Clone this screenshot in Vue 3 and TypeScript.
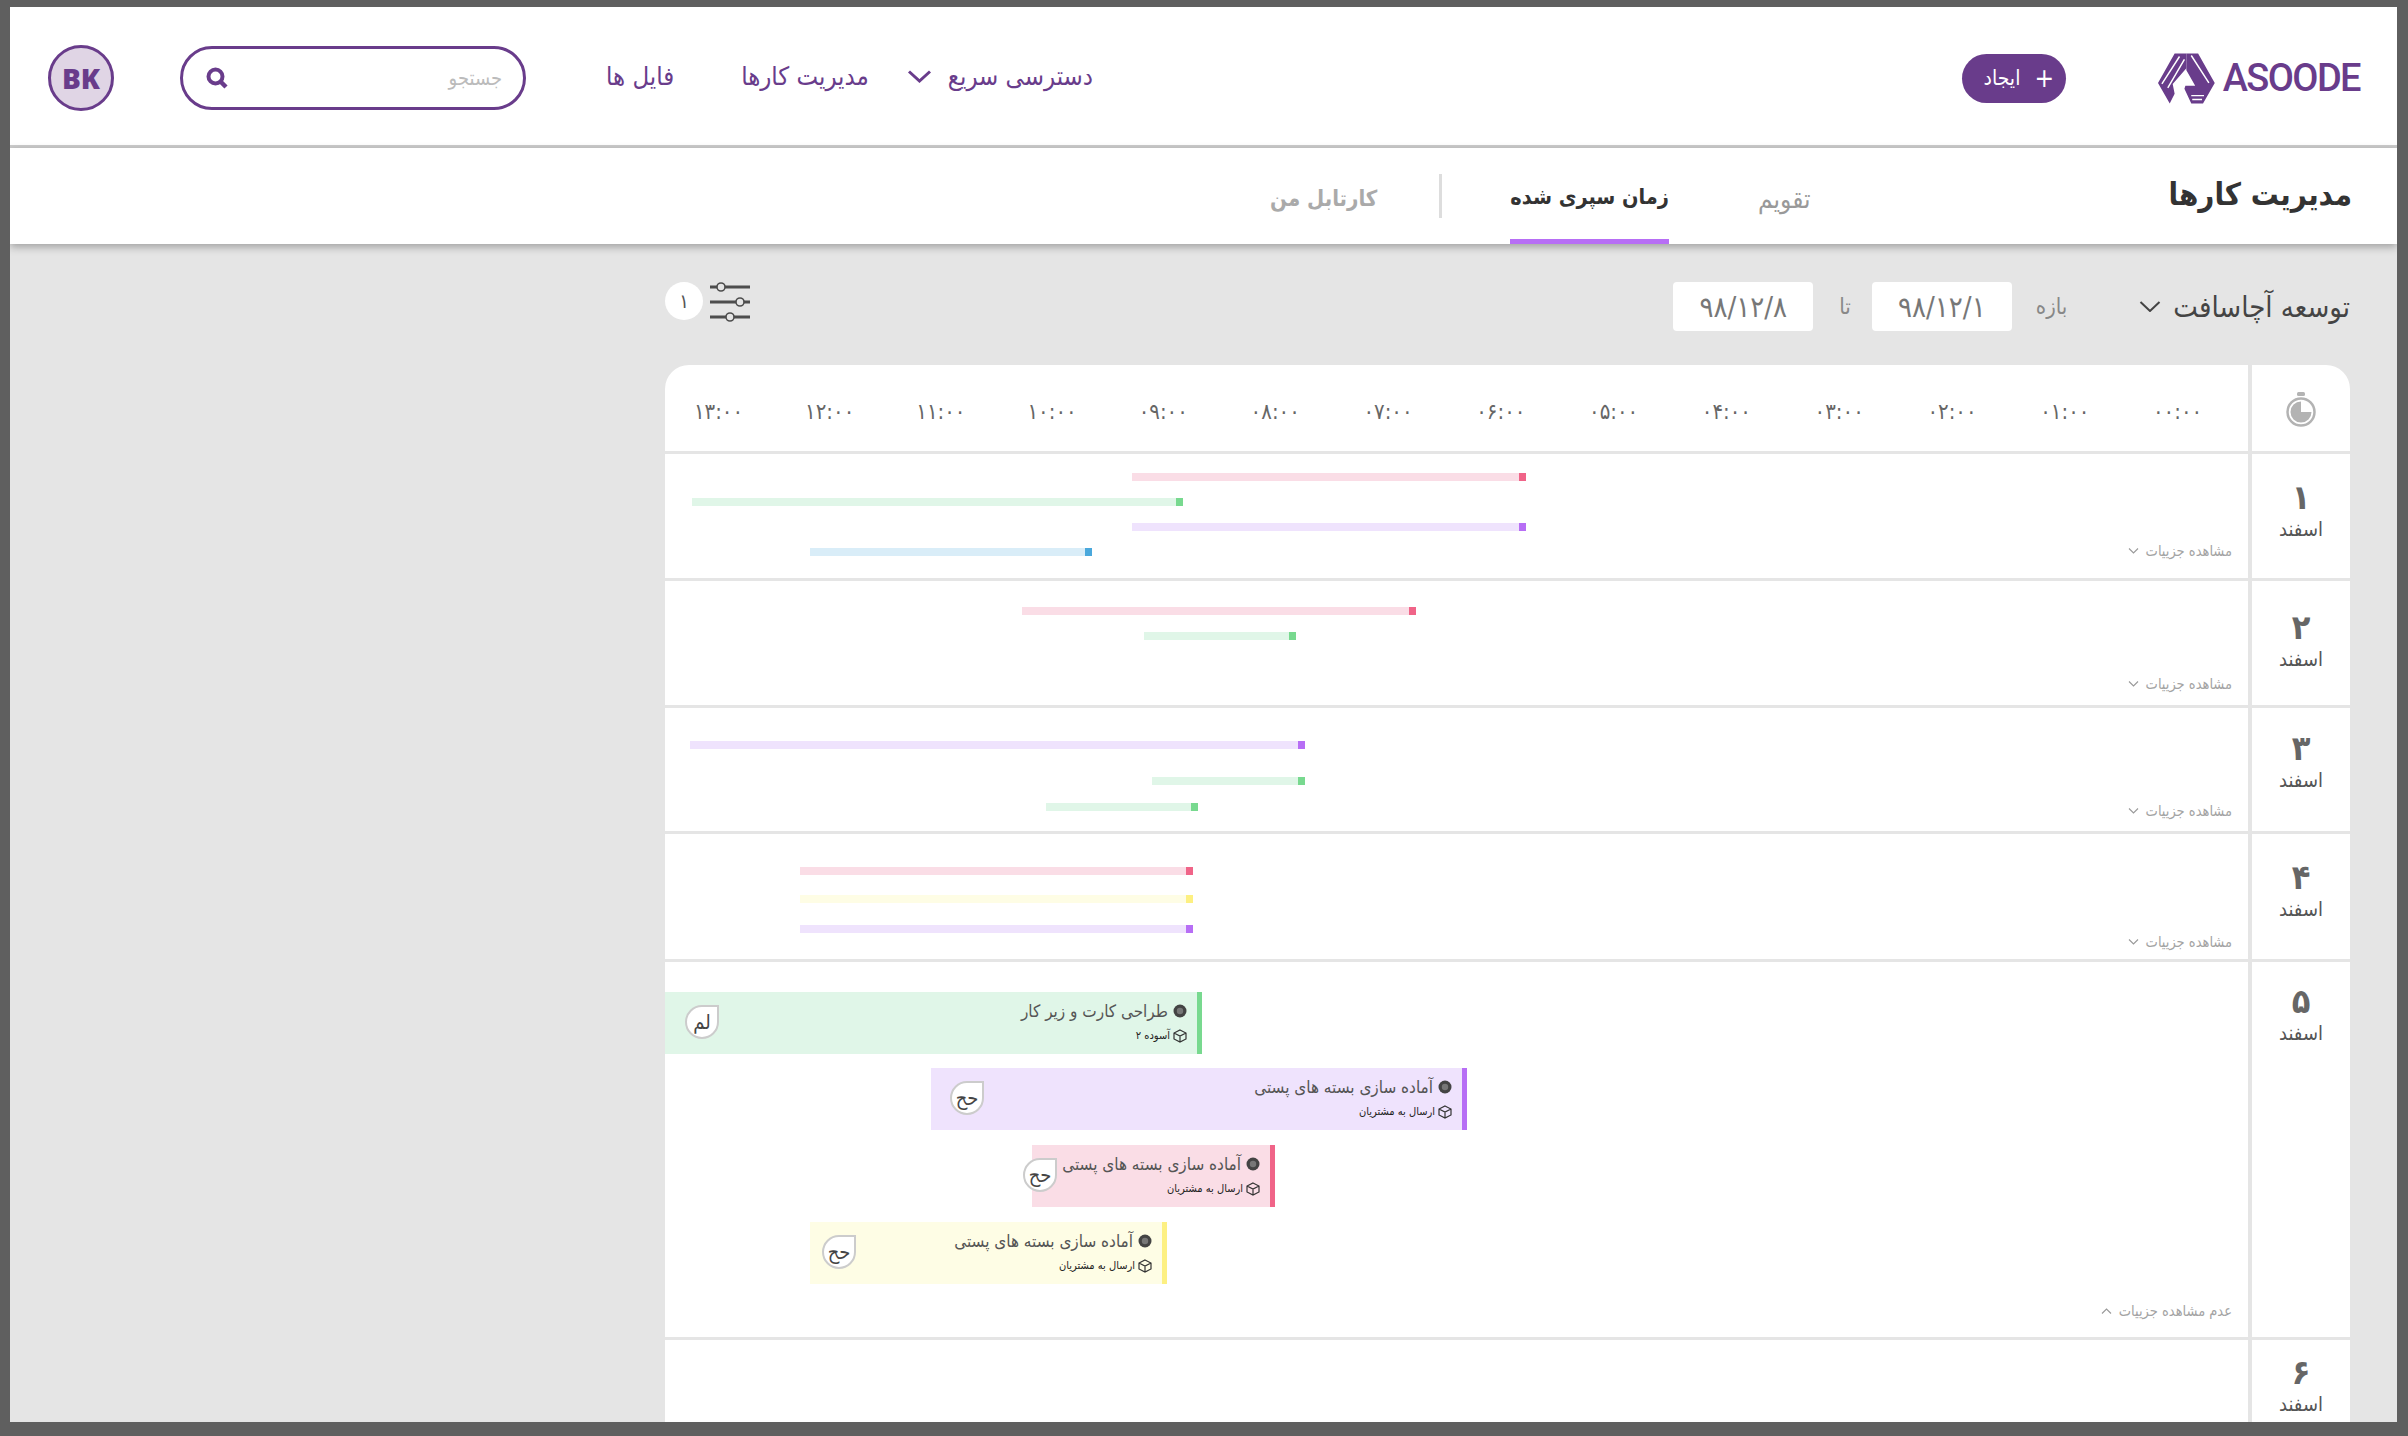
<script setup lang="ts">
interface Bar { color: string; from: number; to: number; y: number }
interface Task { color: string; from: number; to: number; y: number; title: string; sub: string; who: string; whoX: number }
interface Day {
  num: string
  height: number
  pad: number
  detail: number
  open?: boolean
  bars: Bar[]
  tasks: Task[]
}

const palette: Record<string, { bg: string; fg: string }> = {
  pink: { bg: '#fadde6', fg: '#f06488' },
  green: { bg: '#e0f6e8', fg: '#78d98f' },
  purple: { bg: '#efe3fd', fg: '#b76ef5' },
  blue: { bg: '#d9edf8', fg: '#4aa8dc' },
  yellow: { bg: '#fefde5', fg: '#fdf082' },
}

const hours = ['۰۰:۰۰', '۰۱:۰۰', '۰۲:۰۰', '۰۳:۰۰', '۰۴:۰۰', '۰۵:۰۰', '۰۶:۰۰', '۰۷:۰۰', '۰۸:۰۰', '۰۹:۰۰', '۱۰:۰۰', '۱۱:۰۰', '۱۲:۰۰', '۱۳:۰۰']

// x values are page pixels, the lane origin is subtracted when drawn
const days: Day[] = [
  {
    num: '۱', height: 127, pad: 26, detail: 97,
    bars: [
      { color: 'pink', from: 1132, to: 1526, y: 19 },
      { color: 'green', from: 692, to: 1183, y: 44 },
      { color: 'purple', from: 1132, to: 1526, y: 69 },
      { color: 'blue', from: 810, to: 1092, y: 94 },
    ],
    tasks: [],
  },
  {
    num: '۲', height: 127, pad: 29, detail: 103,
    bars: [
      { color: 'pink', from: 1022, to: 1416, y: 26 },
      { color: 'green', from: 1144, to: 1296, y: 51 },
    ],
    tasks: [],
  },
  {
    num: '۳', height: 126, pad: 23, detail: 103,
    bars: [
      { color: 'purple', from: 690, to: 1305, y: 33 },
      { color: 'green', from: 1152, to: 1305, y: 69 },
      { color: 'green', from: 1046, to: 1198, y: 95 },
    ],
    tasks: [],
  },
  {
    num: '۴', height: 128, pad: 26, detail: 108,
    bars: [
      { color: 'pink', from: 800, to: 1193, y: 33 },
      { color: 'yellow', from: 800, to: 1193, y: 61 },
      { color: 'purple', from: 800, to: 1193, y: 91 },
    ],
    tasks: [],
  },
  {
    num: '۵', height: 378, pad: 22, detail: 349, open: true,
    bars: [],
    tasks: [
      { color: 'green', from: 665, to: 1202, y: 30, title: 'طراحی کارت و زیر کار', sub: 'آسوده ۲', who: 'لم', whoX: 20 },
      { color: 'purple', from: 931, to: 1467, y: 106, title: 'آماده سازی بسته های پستی', sub: 'ارسال به مشتریان', who: 'حح', whoX: 19 },
      { color: 'pink', from: 1032, to: 1275, y: 183, title: 'آماده سازی بسته های پستی', sub: 'ارسال به مشتریان', who: 'حح', whoX: -9 },
      { color: 'yellow', from: 810, to: 1167, y: 260, title: 'آماده سازی بسته های پستی', sub: 'ارسال به مشتریان', who: 'حح', whoX: 12 },
    ],
  },
  { num: '۶', height: 90, pad: 15, detail: -1, bars: [], tasks: [] },
]

const laneLeft = 665

function spanStyle(b: Bar | Task) {
  return {
    left: `${b.from - laneLeft}px`,
    width: `${b.to - b.from}px`,
    top: `${b.y}px`,
    background: palette[b.color].bg,
    borderRightColor: palette[b.color].fg,
  }
}
</script>

<template>
  <div class="page">
    <header class="topbar">
      <div class="logo">
        <svg class="logo-mark" width="58" height="51" viewBox="0 0 58 51">
          <path d="M17 0 H29 V15 L15 31 L17 41 L12 51 L0 30 Z" fill="#693c8b" />
          <path d="M29 0 H41 L58 30 L46 51 H34 L27 36 L28 33 H38 L29 17 Z" fill="#693c8b" />
          <path d="M22 3 L4 31 M27 6 L10 35 M34 2 L52 30 M34 43 H47 M35 47 H45" stroke="#fff" stroke-width="1.5" fill="none" />
        </svg>
        <span class="logo-text">ASOODE</span>
      </div>
      <button class="create"><span class="plus">+</span>ایجاد</button>
      <nav class="menu">
        <a class="menu-item">دسترسی سریع
          <svg width="25" height="13" viewBox="0 0 25 13"><path d="M2 1.5 L12.5 11 L23 1.5" fill="none" stroke="#693c8b" stroke-width="3" /></svg>
        </a>
        <a class="menu-item">مدیریت کارها</a>
        <a class="menu-item">فایل ها</a>
      </nav>
      <div class="search">
        <span class="search-hint">جستجو</span>
        <svg width="22" height="22" viewBox="0 0 22 22"><circle cx="9.5" cy="9.5" r="7" fill="none" stroke="#693c8b" stroke-width="4" /><path d="M14.5 14.5 L20 20" stroke="#693c8b" stroke-width="4.5" /></svg>
      </div>
      <div class="avatar">BK</div>
    </header>

    <section class="subbar">
      <h1 class="title">مدیریت کارها</h1>
      <div class="tabs">
        <span class="tab calendar">تقویم</span>
        <span class="tab active">زمان سپری شده</span>
        <span class="tab-sep"></span>
        <span class="tab inbox">کارتابل من</span>
      </div>
    </section>

    <main class="content">
      <div class="filters">
        <span class="project">توسعه آچاسافت
          <svg width="22" height="11" viewBox="0 0 22 11"><path d="M1.5 1 L11 10 L20.5 1" fill="none" stroke="#444" stroke-width="2" /></svg>
        </span>
        <span class="range-label">بازه</span>
        <span class="date">۹۸/۱۲/۱</span>
        <span class="range-to">تا</span>
        <span class="date second">۹۸/۱۲/۸</span>
        <span class="filter-tool">
          <svg width="42" height="40" viewBox="0 0 42 40">
            <g stroke="#4d4d4d" stroke-width="3" fill="#e5e5e5">
              <path d="M1 5 H41 M1 20 H41 M1 35 H41" />
              <circle cx="12" cy="5" r="4" stroke-width="1.6" />
              <circle cx="31" cy="20" r="4" stroke-width="1.6" />
              <circle cx="21" cy="35" r="4" stroke-width="1.6" />
            </g>
          </svg>
          <span class="filter-count">۱</span>
        </span>
      </div>

      <div class="sheet">
        <div class="sheet-head">
          <div class="day-col head-clock">
            <svg width="30" height="36" viewBox="0 0 30 36">
              <rect x="11" y="0" width="8" height="4" rx="1.5" fill="#b3b3b3" />
              <circle cx="15" cy="20" r="13.5" fill="#fff" stroke="#b3b3b3" stroke-width="2.5" />
              <path d="M15 20 V9.5 A10.5 10.5 0 1 0 25.5 20 Z" fill="#b3b3b3" />
            </svg>
          </div>
          <div class="hours">
            <span v-for="h in hours" :key="h" class="hour">{{ h }}</span>
          </div>
        </div>

        <div v-for="d in days" :key="d.num" class="day" :style="{ height: d.height + 'px' }">
          <div class="day-col day-label" :style="{ paddingTop: d.pad + 'px' }">
            <span class="day-num">{{ d.num }}</span>
            <span class="day-month">اسفند</span>
          </div>
          <div class="lane">
            <div v-for="(b, i) in d.bars" :key="i" class="bar" :style="spanStyle(b)"></div>
            <div v-for="(t, i) in d.tasks" :key="i" class="task" :style="spanStyle(t)">
              <div class="task-title">
                <svg width="14" height="14" viewBox="0 0 14 14"><circle cx="7" cy="7" r="6.5" fill="#444" /><circle cx="7" cy="7" r="3.2" fill="#777" /></svg>
                <span>{{ t.title }}</span>
              </div>
              <div class="task-sub">
                <svg width="14" height="14" viewBox="0 0 14 14" fill="none" stroke="#333" stroke-width="1.2"><path d="M7 1 L13 4 V10 L7 13 L1 10 V4 Z M1 4 L7 7 L13 4 M7 7 V13" /></svg>
                <span>{{ t.sub }}</span>
              </div>
              <span class="who" :style="{ left: t.whoX + 'px' }">{{ t.who }}</span>
            </div>
            <span v-if="d.detail > 0" class="detail" :style="{ top: d.detail - 9 + 'px' }">
              {{ d.open ? 'عدم مشاهده جزییات' : 'مشاهده جزییات' }}
              <svg width="11" height="6" viewBox="0 0 11 6"><path :d="d.open ? 'M1 5.5 L5.5 1 L10 5.5' : 'M1 .5 L5.5 5 L10 .5'" fill="none" stroke="#999" stroke-width="1.1" /></svg>
            </span>
          </div>
        </div>
      </div>
    </main>
  </div>
</template>

<style>
html, body {
  margin: 0;
  background: #5f5f5f;
}
</style>

<style scoped>
.page {
  width: 2387px;
  height: 1415px;
  margin: 7px 0 0 10px;
  background: #e5e5e5;
  font-family: "DejaVu Sans Condensed", "DejaVu Sans", sans-serif;
  direction: rtl;
  overflow: hidden;
  color: #444;
}

.topbar {
  height: 134px;
  padding: 4px 37px 0 38px;
  border-bottom: 3px solid #cccccc;
  background: #fff;
  display: flex;
  align-items: center;
}

.logo {
  display: flex;
  direction: ltr;
  align-items: center;
  gap: 8px;
  width: 202px;
}

.logo-text {
  font-family: Roboto, sans-serif;
  font-size: 38px;
  font-weight: 500;
  letter-spacing: -1.6px;
  color: #693c8b;
}

.create {
  margin-right: 92px;
  width: 104px;
  height: 49px;
  padding: 0 12px 0 0;
  border: 0;
  border-radius: 25px;
  background: #693c8b;
  color: #fff;
  font: inherit;
  font-size: 21px;
  display: flex;
  align-items: center;
  justify-content: flex-start;
  gap: 14px;
}

.plus {
  font-size: 26px;
  line-height: 1;
}

.menu {
  margin-right: 869px;
  padding-bottom: 4px;
  display: flex;
  align-items: center;
  color: #693c8b;
  font-size: 25.5px;
}

.menu-item {
  display: flex;
  align-items: center;
  gap: 16px;
  white-space: nowrap;
  margin-left: 38px;
}

.menu-item + .menu-item {
  margin-left: 0;
}

.menu-item:last-child {
  margin-right: 67px;
}

.search {
  margin-right: 80px;
  width: 346px;
  height: 64px;
  box-sizing: border-box;
  border: 3px solid #693c8b;
  border-radius: 32px;
  display: flex;
  align-items: center;
  justify-content: space-between;
  padding: 0 21px 0 23px;
}

.search-hint {
  font-size: 20px;
  color: #bbb;
}

.avatar {
  margin-right: auto;
  width: 66px;
  height: 66px;
  box-sizing: border-box;
  border: 3px solid #693c8b;
  border-radius: 50%;
  background: #e0d5e5;
  color: #693c8b;
  font-family: "Open Sans", sans-serif;
  font-size: 28px;
  font-weight: 800;
  display: flex;
  align-items: center;
  justify-content: center;
}

.subbar {
  height: 96px;
  background: #fff;
  display: flex;
  align-items: center;
  padding-right: 45px;
  box-shadow: 0 3px 8px rgba(0, 0, 0, 0.3);
  position: relative;
}

.title {
  margin: 0;
  padding-bottom: 5px;
  font-size: 31px;
  font-weight: 700;
  color: #333;
  white-space: nowrap;
}

.tabs {
  margin-right: 358px;
  height: 100%;
  display: flex;
  align-items: center;
}

.tab {
  padding-top: 5px;
  font-size: 26px;
  color: #999;
  white-space: nowrap;
}

.tab.active {
  margin-right: 89px;
  height: 100%;
  box-sizing: border-box;
  padding: 5px 0 0;
  display: flex;
  align-items: center;
  color: #333;
  font-weight: 700;
  font-size: 21.5px;
  border-bottom: 5px solid #b76ef5;
}

.tab-sep {
  margin-right: 68px;
  width: 3px;
  height: 44px;
  background: #ddd;
}

.tab.inbox {
  margin-right: 62px;
  font-weight: 700;
  font-size: 22px;
  color: #aaa;
}

.content {
  padding: 38px 47px 0 0;
}

.filters {
  width: 1685px;
  height: 49px;
  display: flex;
  align-items: center;
  margin-bottom: 34px;
}

.project {
  display: flex;
  align-items: center;
  gap: 12px;
  font-size: 29px;
  color: #444;
  white-space: nowrap;
}

.range-label {
  margin-right: 72px;
  font-size: 22px;
  color: #888;
}

.date {
  margin-right: 24px;
  width: 140px;
  height: 49px;
  background: #fff;
  border-radius: 4px;
  font-size: 29px;
  color: #777;
  display: flex;
  align-items: center;
  justify-content: center;
}

.range-to {
  margin-right: 21px;
  font-size: 22px;
  color: #888;
}

.date.second {
  margin-right: 26px;
}

.filter-tool {
  margin-right: auto;
  margin-left: 44px;
  align-self: flex-start;
  position: relative;
  display: flex;
  align-items: center;
}

.filter-count {
  position: absolute;
  left: -44px;
  top: 0;
  width: 38px;
  height: 38px;
  border-radius: 50%;
  background: #fff;
  font-size: 20px;
  color: #555;
  display: flex;
  align-items: center;
  justify-content: center;
}

.sheet {
  width: 1685px;
  background: #fff;
  border-radius: 24px 24px 0 0;
}

.sheet-head {
  height: 86px;
  display: flex;
  border-bottom: 3px solid #e5e5e5;
}

.day-col {
  width: 98px;
  flex: none;
  border-left: 4px solid #e5e5e5;
}

.head-clock {
  display: flex;
  align-items: center;
  justify-content: center;
}

.head-clock svg {
  margin-top: 3px;
}

.hours {
  flex: 1;
  display: flex;
  align-items: center;
  padding-right: 14px;
  padding-top: 6px;
}

.hour {
  width: 112.8px;
  flex: none;
  text-align: center;
  font-size: 22px;
  color: #666;
  direction: ltr;
  unicode-bidi: isolate;
}

.hour:nth-child(n + 10) {
  width: 111.2px;
}

.day {
  display: flex;
  box-sizing: border-box;
  border-bottom: 3px solid #e5e5e5;
}

.day-label {
  display: flex;
  flex-direction: column;
  align-items: center;
}

.day-num {
  font-size: 34px;
  font-weight: 700;
  line-height: 34px;
  color: #666;
}

.day-month {
  font-size: 20px;
  line-height: 30px;
  color: #555;
}

.lane {
  position: relative;
  direction: ltr;
  flex: 1;
}

.bar {
  position: absolute;
  height: 8px;
  box-sizing: border-box;
  border-right: 7px solid;
}

.task {
  position: absolute;
  height: 62px;
  box-sizing: border-box;
  border-right: 5px solid;
  direction: rtl;
  padding: 9px 10px 0 0;
  white-space: nowrap;
}

.task-title {
  display: flex;
  align-items: center;
  gap: 5px;
  font-size: 17px;
  line-height: 20px;
  color: #555;
}

.task-sub {
  margin-top: 7px;
  display: flex;
  align-items: center;
  gap: 3px;
  font-size: 11px;
  line-height: 16px;
  color: #222;
}

.who {
  position: absolute;
  top: 13px;
  width: 34px;
  height: 34px;
  box-sizing: border-box;
  border: 2px solid #ccc;
  border-radius: 50% 0 50% 50%;
  background: #fff;
  font-size: 20px;
  color: #444;
  display: flex;
  align-items: center;
  justify-content: center;
}

.detail {
  position: absolute;
  right: 16px;
  direction: rtl;
  display: flex;
  align-items: center;
  gap: 7px;
  font-size: 14.5px;
  line-height: 18px;
  color: #a3a3a3;
  white-space: nowrap;
}
</style>
